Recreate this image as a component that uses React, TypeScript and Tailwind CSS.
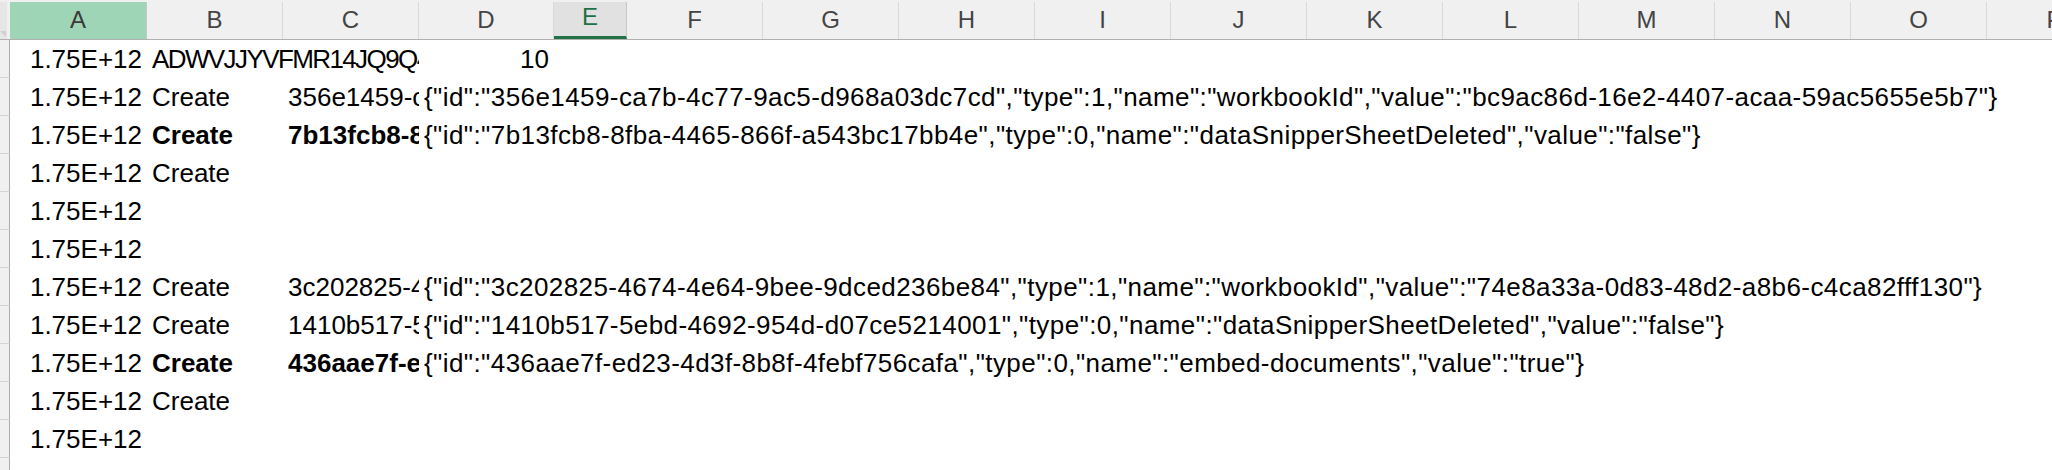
import React from "react";

type Cell = { col: number; text: string; right?: boolean; bold?: boolean; json?: boolean; tight?: boolean };

const letters = ["A", "B", "C", "D", "E", "F", "G", "H", "I", "J", "K", "L", "M", "N", "O", "P"];
const LAST = 16;

const rows: Cell[][] = [
  [
    { col: 1, text: "1.75E+12", right: true },
    { col: 2, text: "ADWVJJYVFMR14JQ9Q4", tight: true },
    { col: 4, text: "10", right: true },
  ],
  [
    { col: 1, text: "1.75E+12", right: true },
    { col: 2, text: "Create" },
    { col: 3, text: "356e1459-ca7b-4c77-9ac5-d968a03dc7cd" },
    {
      col: 4,
      json: true,
      text: '{"id":"356e1459-ca7b-4c77-9ac5-d968a03dc7cd","type":1,"name":"workbookId","value":"bc9ac86d-16e2-4407-acaa-59ac5655e5b7"}',
    },
  ],
  [
    { col: 1, text: "1.75E+12", right: true },
    { col: 2, text: "Create", bold: true },
    { col: 3, text: "7b13fcb8-8fba-4465-866f-a543bc17bb4e", bold: true },
    {
      col: 4,
      json: true,
      text: '{"id":"7b13fcb8-8fba-4465-866f-a543bc17bb4e","type":0,"name":"dataSnipperSheetDeleted","value":"false"}',
    },
  ],
  [
    { col: 1, text: "1.75E+12", right: true },
    { col: 2, text: "Create" },
  ],
  [{ col: 1, text: "1.75E+12", right: true }],
  [{ col: 1, text: "1.75E+12", right: true }],
  [
    { col: 1, text: "1.75E+12", right: true },
    { col: 2, text: "Create" },
    { col: 3, text: "3c202825-4674-4e64-9bee-9dced236be84" },
    {
      col: 4,
      json: true,
      text: '{"id":"3c202825-4674-4e64-9bee-9dced236be84","type":1,"name":"workbookId","value":"74e8a33a-0d83-48d2-a8b6-c4ca82fff130"}',
    },
  ],
  [
    { col: 1, text: "1.75E+12", right: true },
    { col: 2, text: "Create" },
    { col: 3, text: "1410b517-5ebd-4692-954d-d07ce5214001" },
    {
      col: 4,
      json: true,
      text: '{"id":"1410b517-5ebd-4692-954d-d07ce5214001","type":0,"name":"dataSnipperSheetDeleted","value":"false"}',
    },
  ],
  [
    { col: 1, text: "1.75E+12", right: true },
    { col: 2, text: "Create", bold: true },
    { col: 3, text: "436aae7f-ed23-4d3f-8b8f-4febf756cafa", bold: true },
    {
      col: 4,
      json: true,
      text: '{"id":"436aae7f-ed23-4d3f-8b8f-4febf756cafa","type":0,"name":"embed-documents","value":"true"}',
    },
  ],
  [
    { col: 1, text: "1.75E+12", right: true },
    { col: 2, text: "Create" },
  ],
  [{ col: 1, text: "1.75E+12", right: true }],
  [],
];

const gridCols = "grid grid-cols-[10px_137px_136px_136px_135px_73px_repeat(11,136px)]";

function HeaderCell({ letter }: { letter: string }) {
  if (letter === "A") {
    return (
      <div className="h-[37px] flex items-end justify-center pb-[1px] bg-[#9fd5b7] border-r border-[#c8c8c8] text-[#3a3a3a]">
        {letter}
      </div>
    );
  }
  if (letter === "E") {
    return (
      <div className="h-[37px] flex items-end justify-center pb-[1px] bg-[#e1e1e1] border-r border-[#c8c8c8] border-b-[3px] border-b-[#217346] text-[#1e7145]">
        {letter}
      </div>
    );
  }
  return (
    <div className="h-[37px] flex items-end justify-center pb-[1px] border-r border-[#d9d9d9] text-[#444]">
      {letter}
    </div>
  );
}

function Row({ cells }: { cells: Cell[] }) {
  const filled = cells.map((c) => c.col);
  return (
    <div className={gridCols + " h-[38px]"}>
      <div className="bg-[#f0f0f0] border-r border-r-[#ababab] border-b border-b-[#d4d4d4]" />
      {cells.map((c) => {
        const next = filled.find((f) => f > c.col) ?? LAST + 1;
        const span = c.right ? 1 : next - c.col;
        return (
          <div
            key={c.col}
            style={{ gridColumn: `${c.col + 1} / span ${span}` }}
            className={
              "overflow-hidden whitespace-nowrap flex items-center h-[37px] " +
              (c.right ? "justify-end pr-[5px] " : "pl-[5px] ") +
              (c.bold ? "font-bold " : "") +
              (c.json ? "tracking-[0.42px] " : "") +
              (c.tight ? "tracking-[-1.6px]" : "")
            }
          >
            {c.text}
          </div>
        );
      })}
    </div>
  );
}

export default function App() {
  return (
    <div className="w-[2052px] h-[470px] overflow-hidden bg-white text-black font-['Liberation_Sans',Arial,sans-serif]">
      <div className="bg-[#f0f0f0] pt-[2px] border-b border-[#b0b0b0] text-[24px]">
        <div className={gridCols}>
          <div className="h-[37px] bg-[#e6e6e6] border-r-[3px] border-[#f0f0f0] relative">
            <div className="absolute right-[1px] bottom-[2px] w-0 h-0 border-b-[6px] border-r-[6px] border-b-transparent border-r-[#d0d0d0]" />
          </div>
          {letters.map((l) => (
            <HeaderCell key={l} letter={l} />
          ))}
        </div>
      </div>
      <div className="text-[26px] leading-none">
        {rows.map((r, i) => (
          <Row key={i} cells={r} />
        ))}
      </div>
    </div>
  );
}
